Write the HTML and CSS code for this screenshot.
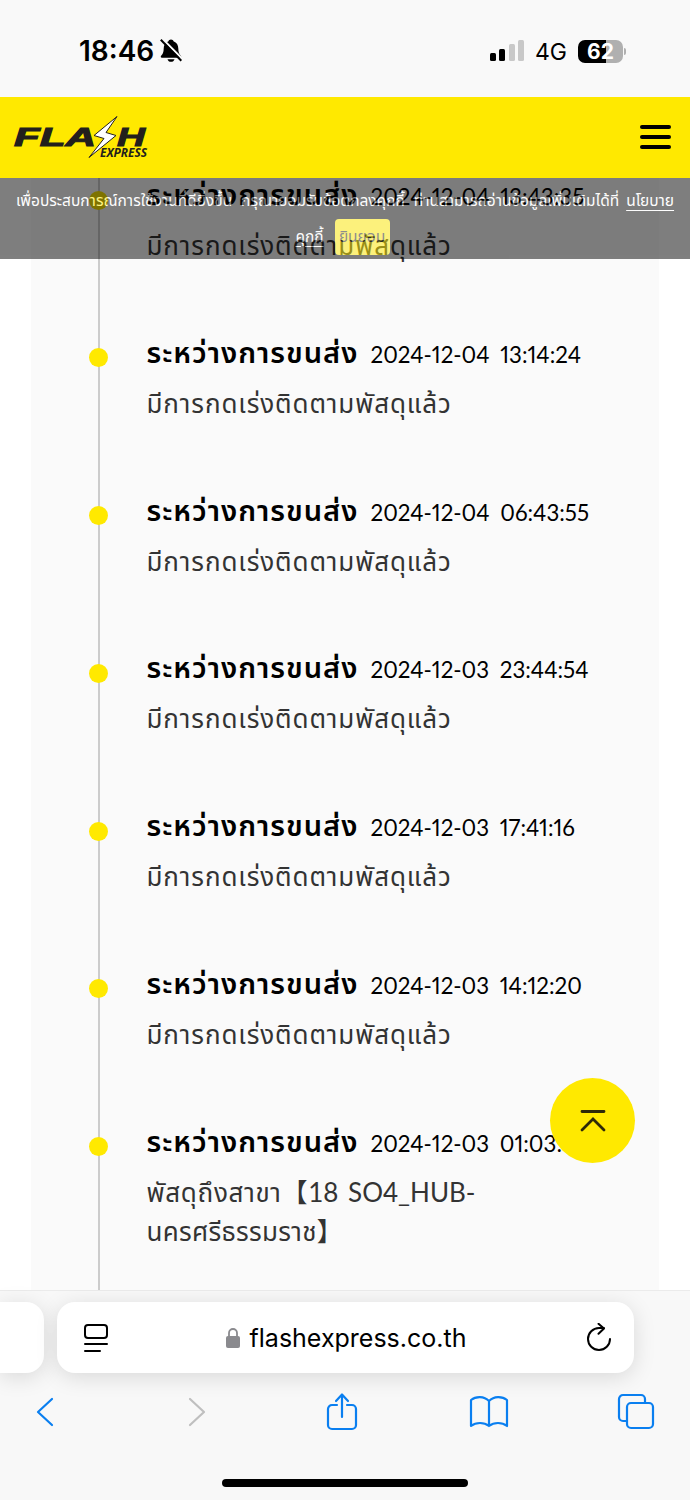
FILE: index.html
```
<!DOCTYPE html>
<html lang="th">
<head>
    <meta charset="utf-8">
    <title>Flash Express</title>
    <link rel="stylesheet" href="styles.css">
</head>
<body>
    <div class="phone">
        <div class="status">
            <span class="clock">18:46</span>
            <svg class="bell" width="24" height="26" viewBox="0 0 24 26">
                <path d="M12 1.500c1.400 0 2.300.8 2.500 1.800 3.300 1.200 4.800 4 4.800 7.200 0 4 1 5.500 2.600 7.200.7.800.4 2-.8 2H2.900c-1.200 0-1.500-1.200-.8-2C3.700 16 4.700 14.500 4.700 10.500 4.700 7.300 6.200 4.500 9.500 3.300 9.700 2.300 10.600 1.500 12 1.500zM8.500 21.200h7c-.4 1.700-1.800 2.600-3.500 2.600s-3.100-.9-3.500-2.600z"/>
                <path d="M3 .5L24 21.500" stroke="#f9f9f9" stroke-width="2.200"/>
                <path d="M1.800 1.800L22.300 22.800" stroke="#000" stroke-width="2"/>
            </svg>
            <svg class="signal" width="35" height="22" viewBox="0 0 35 22">
                <rect x="0" y="13" width="6" height="8" rx="1.500"/>
                <rect x="9" y="9" width="6" height="12" rx="1.500"/>
                <rect x="19" y="4" width="6" height="17" rx="1.500" fill="#c8c8c8"/>
                <rect x="28" y="0" width="6" height="21" rx="1.500" fill="#c8c8c8"/>
            </svg>
            <span class="net">4G</span>
            <span class="battery">62</span>
            <span class="battery-tip"></span>
        </div>

        <header>
            <svg class="logo" width="136" height="44" viewBox="0 0 136 44">
                <g fill="#231f1c" font-family="Liberation Sans, sans-serif" font-weight="bold" font-style="italic">
                    <text x="1" y="30.500" font-size="25" stroke="#231f1c" stroke-width="1" textLength="82" lengthAdjust="spacingAndGlyphs">FLA</text>
                    <text x="104" y="30.500" font-size="25" stroke="#231f1c" stroke-width="1" textLength="28" lengthAdjust="spacingAndGlyphs">H</text>
                    <text x="87" y="41.500" font-family="Open Sans, sans-serif" font-size="12" textLength="47" lengthAdjust="spacingAndGlyphs">EXPRESS</text>
                </g>
                <path d="M104 1.500L81 20.500l10 3L76 42.500l27-22-10-3z" fill="#fff" stroke="#231f1c"/>
            </svg>
            <div class="menu"><i></i><i></i><i></i></div>
        </header>

        <main>
            <div class="timeline">
                <div class="item">
                    <h3><b>ระหว่างการขนส่ง</b><time>2024-12-04 13:43:35</time></h3>
                    <p>มีการกดเร่งติดตามพัสดุแล้ว</p>
                </div>
                <div class="item">
                    <h3><b>ระหว่างการขนส่ง</b><time>2024-12-04 13:14:24</time></h3>
                    <p>มีการกดเร่งติดตามพัสดุแล้ว</p>
                </div>
                <div class="item">
                    <h3><b>ระหว่างการขนส่ง</b><time>2024-12-04 06:43:55</time></h3>
                    <p>มีการกดเร่งติดตามพัสดุแล้ว</p>
                </div>
                <div class="item">
                    <h3><b>ระหว่างการขนส่ง</b><time>2024-12-03 23:44:54</time></h3>
                    <p>มีการกดเร่งติดตามพัสดุแล้ว</p>
                </div>
                <div class="item">
                    <h3><b>ระหว่างการขนส่ง</b><time>2024-12-03 17:41:16</time></h3>
                    <p>มีการกดเร่งติดตามพัสดุแล้ว</p>
                </div>
                <div class="item">
                    <h3><b>ระหว่างการขนส่ง</b><time>2024-12-03 14:12:20</time></h3>
                    <p>มีการกดเร่งติดตามพัสดุแล้ว</p>
                </div>
                <div class="item">
                    <h3><b>ระหว่างการขนส่ง</b><time>2024-12-03 01:03:38</time></h3>
                    <p class="station">พัสดุถึงสาขา【<span>18 SO4_HUB-</span><br><em>นครศรีธรรมราช】</em></p>
                </div>
            </div>

            <div class="cookie">
                <div class="cookie-line"><span>เพื่อประสบการณ์การใช้งานที่ดียิ่งขึ้น กรุณายอมรับข้อตกลงคุกกี้ ท่านสามารถอ่านข้อมูลเพิ่มเติมได้ที่</span> <a href="#">นโยบาย</a></div>
                <div class="cookie-line"><a href="#">คุกกี้</a><button>ยินยอม</button></div>
            </div>

            <div class="to-top">
                <svg width="28" height="24" viewBox="0 0 28 24" fill="none" stroke="#2e2a08" stroke-width="2.800" stroke-linecap="round">
                    <path d="M3 2.500h22M3 21L14 10 25 21"/>
                </svg>
            </div>
        </main>

        <footer>
            <div class="tabs">
                <div class="tab-prev"></div>
                <div class="address">
                    <svg width="26" height="30" viewBox="0 0 26 30" fill="none" stroke="#000" stroke-width="2" stroke-linecap="round">
                        <rect x="2" y="2" width="22" height="13" rx="3"/>
                        <path d="M2 21h22M2 28h15"/>
                    </svg>
                    <div class="site">
                        <svg width="16" height="22" viewBox="0 0 16 22">
                            <rect x="1" y="9" width="14" height="12" rx="2" fill="#8a8a8e"/>
                            <path d="M4 10V6a4 4 0 0 1 8 0v4" fill="none" stroke="#8a8a8e" stroke-width="1.800"/>
                        </svg>
                        <span>flashexpress.co.th</span>
                    </div>
                    <svg width="26" height="30" viewBox="0 0 26 30" fill="none" stroke="#000" stroke-width="2" stroke-linecap="round" stroke-linejoin="round">
                        <path d="M24 16a11 11 0 1 1-11-11h5M12.500 0.800l5.500 4.700-5.500 5.300"/>
                    </svg>
                </div>
            </div>
            <div class="toolbar">
                <svg width="20" height="32" viewBox="0 0 20 32"><path d="M18 3L4 16l14 13"/></svg>
                <svg class="off" width="20" height="32" viewBox="0 0 20 32"><path d="M4 3l14 13L4 29"/></svg>
                <svg class="share" width="32" height="40" viewBox="0 0 32 40"><path d="M11 13H6a4 4 0 0 0-4 4v16a4 4 0 0 0 4 4h20a4 4 0 0 0 4-4V17a4 4 0 0 0-4-4h-5M16 25V3M10 9l6-6.500L22 9"/></svg>
                <svg class="book" width="40" height="34" viewBox="0 0 40 34"><path d="M20 6C15 1 7 1 2 5v26c5-4 13-4 18 0 5-4 13-4 18 0V5c-5-4-13-4-18 1zv25"/></svg>
                <svg class="windows" width="38" height="38" viewBox="0 0 38 38"><path d="M10 28H6a4 4 0 0 1-4-4V6a4 4 0 0 1 4-4h18a4 4 0 0 1 4 4v4"/><rect x="10" y="10" width="26" height="25" rx="4"/></svg>
            </div>
            <div class="home"></div>
        </footer>
    </div>
</body>
</html>
```

FILE: styles.css
```
* {
    box-sizing: border-box;
}
body {
    margin: 0;
    background: #fff;
    color: #000;
    font-family: Lato, "Noto Sans Thai", "Noto Sans CJK SC", sans-serif;
}
svg {
    display: block;
    flex: none;
}
.phone {
    width: 690px;
    height: 1500px;
    display: flex;
    flex-direction: column;
    overflow: hidden;
}
.status {
    height: 97px;
    flex: none;
    display: flex;
    align-items: center;
    padding: 5px 64px 0 79px;
    background: #f9f9f9;
    font-family: Inter, sans-serif;
}
.clock {
    width: 80px;
    font-size: 28px;
    font-weight: 600;
}
.signal {
    margin-left: auto;
}
.net {
    width: 32px;
    margin: 1px 11px 0 10px;
    font-size: 23px;
}
.battery {
    width: 45px;
    height: 23px;
    border-radius: 7px;
    background: linear-gradient(90deg, #000 28px, #b0b0b0 28px);
    color: #fff;
    font-size: 21px;
    font-weight: 700;
    line-height: 23px;
    text-align: center;
}
.battery-tip {
    width: 2px;
    height: 7px;
    margin-left: 1px;
    border-radius: 0 2px 2px 0;
    background: #b0b0b0;
}
header {
    height: 81px;
    flex: none;
    display: flex;
    align-items: center;
    justify-content: space-between;
    padding: 0 19px 1px 13px;
    background: #ffe900;
}
.menu {
    width: 31px;
    display: flex;
    flex-direction: column;
    gap: 6px;
}
.menu i {
    height: 4px;
    border-radius: 2px;
    background: #000;
}
main {
    height: 1112px;
    flex: none;
    position: relative;
    overflow: hidden;
}
.timeline {
    width: 628px;
    height: 1112px;
    margin-left: 31px;
    padding-left: 67px;
    background: linear-gradient(#ccc, #ccc) 67px 0 / 2px 100% no-repeat #fafafa;
}
.item {
    height: 157.8px;
    position: relative;
    padding-left: 48.5px;
}
.item::before {
    content: "";
    position: absolute;
    top: 12.5px;
    left: -9px;
    width: 19px;
    height: 19px;
    border-radius: 50%;
    background: #ffe900;
}
.item h3 {
    height: 48px;
    margin: 0;
    display: flex;
    align-items: baseline;
    font-size: 29px;
    font-weight: 400;
    line-height: 32px;
    white-space: nowrap;
}
.item b {
    width: 224px;
    font-weight: 600;
    letter-spacing: 1px;
}
.item time {
    font-size: 22.3px;
    font-variant-numeric: proportional-nums;
    word-spacing: 5px;
}
.item p {
    margin: 0;
    color: #333;
    font-size: 26px;
    line-height: 39px;
    letter-spacing: .9px;
    white-space: nowrap;
}
.item .station {
    letter-spacing: .7px;
}
.station span {
    letter-spacing: 0;
    word-spacing: 3px;
}
.station em {
    font-style: normal;
    letter-spacing: .3px;
}
/* whole bar is see-through, text and button included */
.cookie {
    position: absolute;
    top: 0;
    left: 0;
    width: 690px;
    height: 81px;
    padding-top: 5px;
    background: #000;
    opacity: .5;
    color: #fff;
    font-size: 15.5px;
    word-spacing: 5px;
}
.cookie-line {
    height: 36px;
    display: flex;
    align-items: center;
    justify-content: center;
    gap: 7px;
    white-space: nowrap;
}
.cookie a {
    color: #fff;
    text-underline-offset: 4px;
}
.cookie button {
    width: 55px;
    height: 36px;
    margin: 0 5px 0 4px;
    padding: 0;
    border: 0;
    border-radius: 4px;
    background: #ffe900;
    color: #222;
    font: inherit;
}
.to-top {
    position: absolute;
    top: 900px;
    left: 550px;
    width: 85px;
    height: 85px;
    border-radius: 50%;
    background: #ffe900;
    display: flex;
    align-items: center;
    justify-content: center;
}
footer {
    height: 210px;
    flex: none;
    display: flex;
    flex-direction: column;
    background: #f8f8f8;
    border-top: 1px solid #ebebeb;
}
.tabs {
    display: flex;
    gap: 13px;
    padding-top: 11px;
}
.tab-prev,
.address {
    height: 71px;
    background: #fff;
    box-shadow: 0 4px 22px rgba(0, 0, 0, .13);
}
.tab-prev {
    width: 44px;
    border-radius: 0 18px 18px 0;
}
.address {
    width: 577px;
    border-radius: 18px;
    display: flex;
    align-items: center;
    justify-content: space-between;
    padding: 0 22px 0 26px;
}
.site {
    display: flex;
    align-items: center;
    gap: 9px;
    margin-right: 4px;
    font-family: Inter, sans-serif;
    font-size: 25px;
}
.toolbar {
    height: 40px;
    margin-top: 19px;
    padding-left: 34px;
    display: flex;
    align-items: center;
    fill: none;
    stroke: #0a7ff0;
    stroke-width: 2.200;
    stroke-linecap: round;
    stroke-linejoin: round;
}
.toolbar .off {
    margin-left: 132px;
    stroke: #bfbfbf;
}
.share {
    margin-left: 120px;
}
.book {
    margin-left: 111px;
}
.windows {
    margin-left: 108px;
}
.home {
    width: 246px;
    height: 8px;
    margin: 47px auto 0;
    border-radius: 4px;
    background: #000;
}
```
